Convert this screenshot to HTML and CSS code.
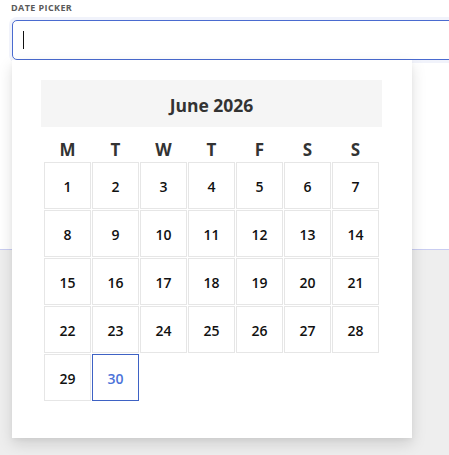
FILE: index.html
```html
<!DOCTYPE html>
<html>
<head>
<meta charset="utf-8">
<link rel="stylesheet" href="styles.css">
</head>
<body>
<div class="card">
  <div class="label">Date Picker</div>
  <div class="field">
    <div class="inputwrap">
      <div class="input"><span class="caret"></span></div>
    </div>
    <div class="popup">
      <div class="month">June 2026</div>
      <div class="grid">
        <div class="wd">M</div><div class="wd">T</div><div class="wd">W</div><div class="wd">T</div><div class="wd">F</div><div class="wd">S</div><div class="wd">S</div>
        <div class="day">1</div><div class="day">2</div><div class="day">3</div><div class="day">4</div><div class="day">5</div><div class="day">6</div><div class="day">7</div>
        <div class="day">8</div><div class="day">9</div><div class="day">10</div><div class="day">11</div><div class="day">12</div><div class="day">13</div><div class="day">14</div>
        <div class="day">15</div><div class="day">16</div><div class="day">17</div><div class="day">18</div><div class="day">19</div><div class="day">20</div><div class="day">21</div>
        <div class="day">22</div><div class="day">23</div><div class="day">24</div><div class="day">25</div><div class="day">26</div><div class="day">27</div><div class="day">28</div>
        <div class="day">29</div><div class="day today">30</div>
      </div>
    </div>
  </div>
</div>
</body>
</html>
```
FILE: styles.css
```css
html, body {
  margin: 0;
  padding: 0;
}
body {
  background: #eeeeee;
  font-family: "Open Sans", "Liberation Sans", sans-serif;
  overflow: hidden;
  height: 455px;
}
.card {
  background: #ffffff;
  height: 250px;
  border-bottom: 1px solid #c9cdf1;
  padding: 0 0 0 12px;
  box-sizing: border-box;
}
.label {
  font-size: 9px;
  font-weight: 700;
  letter-spacing: 0.4px;
  text-transform: uppercase;
  color: #5a5a5a;
  line-height: 14px;
  margin-left: -1px;
  padding-top: 1px;
}
.field {
  position: relative;
  margin-top: 2px;
}
.inputwrap {
  overflow: hidden;
  margin-left: -3px;
  padding: 3px 0 3px 3px;
}
.input {
  height: 38px;
  margin-right: -20px;
  border: 1px solid #4a6bd0;
  border-radius: 5px;
  box-shadow: 0 0 0 3px rgba(74, 107, 208, 0.08);
  background: #fff;
  display: flex;
  align-items: center;
  padding-left: 10px;
}
.caret {
  width: 1px;
  height: 18px;
  background: #111;
}
.popup {
  position: absolute;
  left: 0;
  top: 43px;
  width: 400px;
  height: 378px;
  background: #fff;
  box-shadow: 0 6px 14px rgba(0, 0, 0, 0.13), 0 2px 4px rgba(0,0,0,0.04);
  padding: 20px 0 0 29px;
  box-sizing: border-box;
}
.month {
  width: 341px;
  height: 47px;
  padding-top: 2px;
  box-sizing: border-box;
  background: #f5f5f5;
  color: #333;
  font-weight: 700;
  font-size: 17.5px;
  display: flex;
  align-items: center;
  justify-content: center;
}
.grid {
  display: grid;
  grid-template-columns: repeat(7, 47px);
  grid-template-rows: 30px;
  grid-auto-rows: 47px;
  gap: 1px;
  margin: 4px 0 0 3px;
}
.wd {
  font-weight: 700;
  font-size: 17px;
  color: #333;
  text-align: center;
  line-height: 30px;
  padding-top: 4px;
  height: 26px;
}
.day {
  border: 1px solid #e6e6e6;
  box-sizing: border-box;
  display: flex;
  align-items: center;
  justify-content: center;
  padding-top: 1px;
  font-size: 14px;
  font-weight: 600;
  color: #111;
}
.today {
  border-color: #3e62c4;
  color: #4c73d9;
  font-weight: 600;
}
```
